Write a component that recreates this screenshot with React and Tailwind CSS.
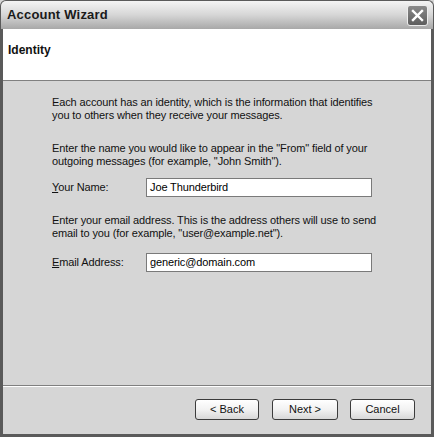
import React from 'react';

const font = { fontFamily: '"Liberation Sans", Arial, sans-serif' };

const Field = ({ mnemonic, rest, value }) => (
  <div className="flex items-center h-[19px]">
    <span className="w-[94px] text-[11px] text-[#111]">
      <span className="underline">{mnemonic}</span>{rest}
    </span>
    <div className="w-[226px] h-[19px] bg-white border border-[#7a7a7a] flex items-center px-[3px] text-[11px] text-black">
      {value}
    </div>
  </div>
);

const WizButton = ({ children, className = '' }) => (
  <button
    type="button"
    className={`h-[21px] rounded-[3px] border border-[#3c3c3c] bg-gradient-to-b from-white via-[#f2f2f2] to-[#d8d8d8] text-[11px] text-[#111] flex items-center justify-center ${className}`}
  >
    {children}
  </button>
);

export default function App() {
  return (
    <div className="w-[434px] h-[437px] flex flex-col bg-[#d6d6d6]" style={font}>
      {/* Title bar */}
      <div className="h-[29px] shrink-0 rounded-t-[6px] border border-b-0 border-[#5a5a5a] bg-gradient-to-b from-[#f4f4f4] via-[#d6d6d6] to-[#a8a8a8] flex items-center justify-between pl-[6px] pr-[5px]">
        <span className="text-[13px] font-bold text-[#1a1a1a] tracking-[0.2px]">Account Wizard</span>
        <div className="w-[21px] h-[21px] rounded-[3px] border border-[#ececec] bg-gradient-to-b from-[#8a8a8a] to-[#5e5e5e] flex items-center justify-center">
          <svg width="13" height="13" viewBox="0 0 13 13">
            <path d="M2 2 L11 11 M11 2 L2 11" stroke="white" strokeWidth="2.4" strokeLinecap="square" />
          </svg>
        </div>
      </div>

      {/* Frame */}
      <div className="flex-1 flex flex-col border-x-[3px] border-b-[3px] border-[#5a5a5a]">
        {/* Header */}
        <div className="h-[52px] shrink-0 bg-white border-b border-[#808080] pl-[5px] pt-[8px]">
          <span className="text-[12px] font-bold text-[#111]">Identity</span>
        </div>

        {/* Body */}
        <div className="flex-1 pl-[49px] pt-[15px] text-[11px] leading-[13px] text-[#111] tracking-[-0.12px]">
          <p className="w-[340px]">
            Each account has an identity, which is the information that identifies you to others when they receive your messages.
          </p>
          <p className="w-[340px] mt-[20px]">
            Enter the name you would like to appear in the "From" field of your outgoing messages (for example, "John Smith").
          </p>
          <div className="mt-[10px]">
            <Field mnemonic="Y" rest="our Name:" value="Joe Thunderbird" />
          </div>
          <p className="w-[340px] mt-[17px]">
            Enter your email address. This is the address others will use to send email to you (for example, "user@example.net").
          </p>
          <div className="mt-[13px]">
            <Field mnemonic="E" rest="mail Address:" value="generic@domain.com" />
          </div>
        </div>

        {/* Footer */}
        <div className="h-[49px] shrink-0 border-t border-[#808080] shadow-[inset_0_1px_0_#ffffff] flex items-start justify-end pt-[13px] pr-[16px]">
          <WizButton className="w-[64px]">&lt; Back</WizButton>
          <WizButton className="w-[66px] ml-[13px]">Next &gt;</WizButton>
          <WizButton className="w-[65px] ml-[12px]">Cancel</WizButton>
        </div>
      </div>
    </div>
  );
}
